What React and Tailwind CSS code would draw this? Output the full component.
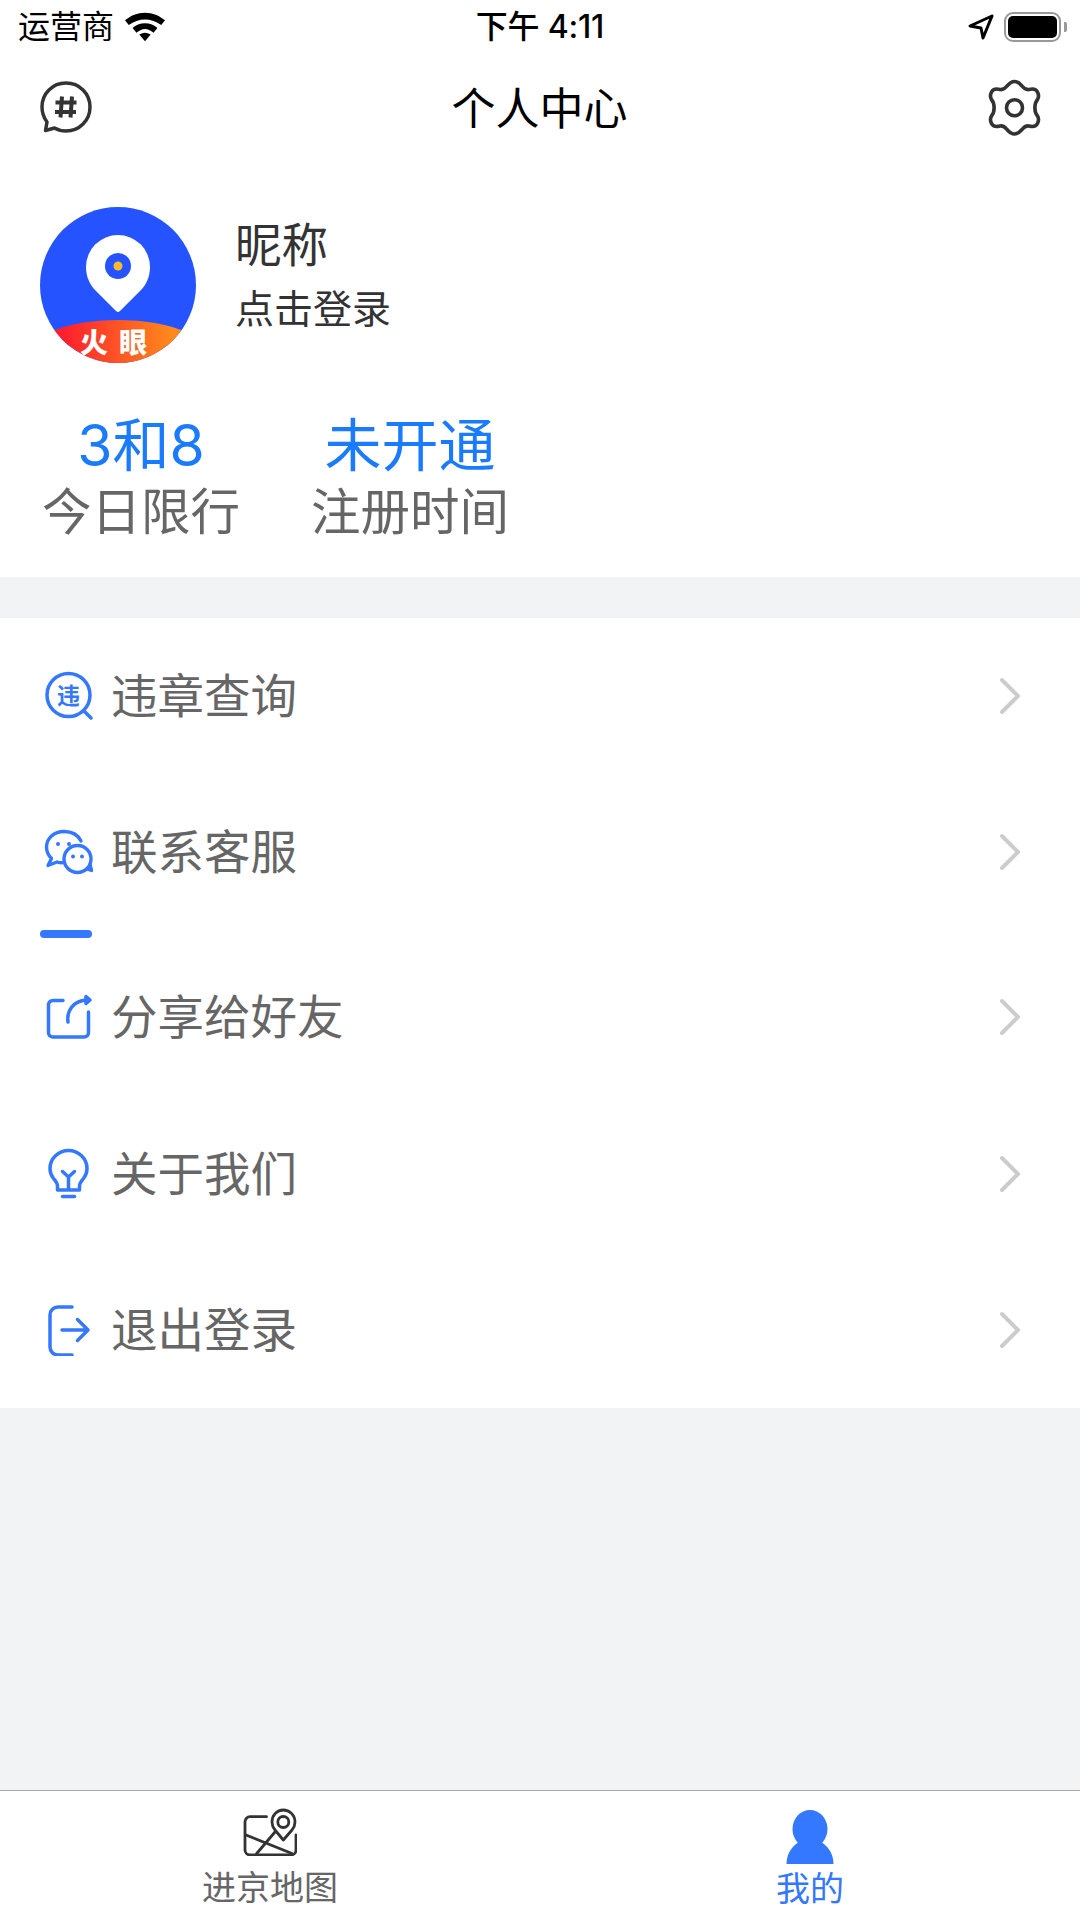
import React from 'react';

const BLUE = '#3478ff';

const ViolationIcon = () => (
  <svg width="52" height="52" viewBox="0 0 52 52" fill="none" stroke={BLUE} strokeWidth="3.500">
    <circle cx="24.500" cy="25" r="21.500" />
    <path d="M40 41l7 7" strokeLinecap="round" />
    <text x="24.500" y="33.500" textAnchor="middle" fontSize="23" fill={BLUE} stroke="none" fontFamily="'Noto Sans CJK SC', sans-serif" fontWeight="700">违</text>
  </svg>
);

const ChatIcon = () => (
  <svg width="52" height="52" viewBox="0 0 52 52" fill="none" stroke={BLUE} strokeWidth="3.400" strokeLinejoin="round" strokeLinecap="round">
    <path d="M20 5.500C10 5.500 2.500 12.500 2.500 21c0 5 2 8.500 5 11.500L4 39.500l9-3.500c1.500.5 3 .8 5 .8" />
    <path d="M37 15C34 9 27.500 5.500 20 5.500" />
    <circle cx="33.500" cy="33" r="13.500" />
    <path d="M43 43l4.500 1.500-1.500-6" fill={BLUE} />
    <circle cx="14" cy="18" r="2" fill={BLUE} stroke="none" />
    <circle cx="25" cy="18" r="2" fill={BLUE} stroke="none" />
    <circle cx="29" cy="30.500" r="2" fill={BLUE} stroke="none" />
    <circle cx="38" cy="30.500" r="2" fill={BLUE} stroke="none" />
  </svg>
);

const ShareIcon = () => (
  <svg width="52" height="52" viewBox="0 0 52 52" fill="none" stroke={BLUE} strokeWidth="3.500" strokeLinecap="round" strokeLinejoin="round">
    <path d="M19 9.500H9a4.500 4.500 0 0 0-4.500 4.500v27.500A4.500 4.500 0 0 0 9 46h31a4.500 4.500 0 0 0 4.500-4.500V21" />
    <path d="M24 31c-1.500-12 6-21 18-22" />
    <path d="M42 5.500l4 3.500-4 3.500z" fill={BLUE} />
  </svg>
);

const BulbIcon = () => (
  <svg width="52" height="52" viewBox="0 0 52 52" fill="none" stroke={BLUE} strokeWidth="3.500" strokeLinecap="round" strokeLinejoin="round">
    <path d="M13.500 42v-4c0-3-2-5-4-7.500C7.500 28 6 24.500 6 20.500 6 10.500 14.500 2.500 24.500 2.500S43 10.500 43 20.500c0 4-1.500 7.500-3.500 10-2 2.500-4 4.500-4 7.500v4z" />
    <path d="M24.500 41V29M18.500 23.500l6 5.500 6-5.500" />
    <path d="M18.500 48.500h12" />
  </svg>
);

const LogoutIcon = () => (
  <svg width="52" height="52" viewBox="0 0 52 52" fill="none" stroke={BLUE} strokeWidth="3.500" strokeLinecap="round" strokeLinejoin="round">
    <path d="M28 3H14a8 8 0 0 0-8 8v32a8 8 0 0 0 8 8h14" />
    <path d="M18 26h25M33.500 15.500L44 26 33.500 36.500" />
  </svg>
);

const menus = [
  { label: '违章查询', Icon: ViolationIcon },
  { label: '联系客服', Icon: ChatIcon },
  { label: '分享给好友', Icon: ShareIcon, mark: true },
  { label: '关于我们', Icon: BulbIcon },
  { label: '退出登录', Icon: LogoutIcon },
];

const Row = ({ label, Icon }) => (
  <div className="flex items-center h-[156.2px] pl-[44px] pr-[59px]">
    <Icon />
    <span className="ml-[15px] text-[46.500px] leading-[60px] text-[#666666]">{label}</span>
    <svg className="ml-auto" width="22" height="38" viewBox="0 0 22 38" fill="none" stroke="#cccccc" strokeWidth="4" strokeLinecap="round" strokeLinejoin="round">
      <path d="M3 3l16 16L3 35" />
    </svg>
  </div>
);

const Logo = () => (
  <svg width="156" height="156" viewBox="0 0 156 156">
    <defs>
      <linearGradient id="fire" x1="0" x2="1" y1="0" y2="0">
        <stop offset="0.1" stopColor="#ff1f2d" />
        <stop offset="0.9" stopColor="#ff8a1c" />
      </linearGradient>
      <clipPath id="disc">
        <circle cx="78" cy="78" r="78" />
      </clipPath>
    </defs>
    <circle cx="78" cy="78" r="78" fill="#2453ff" />
    <path d="M80 104a3 3 0 0 1-4 0L56 84C50 78 46 70 46 60a32 32 0 0 1 64 0c0 10-4 18-10 24z" fill="#fff" />
    <circle cx="78" cy="59" r="13" fill="#2453ff" />
    <circle cx="78" cy="59" r="4.500" fill="#fdbb2b" />
    <g clipPath="url(#disc)">
      <path d="M10 125c18-8 42-12 68-12s50 4 68 12v31H10z" fill="url(#fire)" />
    </g>
    <text x="54" y="146" fontSize="28" textAnchor="middle" fill="#fff" fontWeight="900" fontFamily="'Noto Sans CJK SC', sans-serif">火</text>
    <text x="93" y="146" fontSize="28" textAnchor="middle" fill="#fff" fontWeight="900" fontFamily="'Noto Sans CJK SC', sans-serif">眼</text>
  </svg>
);

const Stat = ({ value, label }) => (
  <div className="flex flex-col items-center">
    <span className="text-[57px] leading-[68px] text-[#1a7bff]">{value}</span>
    <span className="text-[49.500px] leading-[64px] text-[#666666]">{label}</span>
  </div>
);

export default function App() {
  return (
    <div className="w-[1080px] h-[1920px] flex flex-col bg-[#f2f3f5] font-['Inter','Noto_Sans_CJK_SC',sans-serif] overflow-hidden">
      <div className="bg-white">
        {/* status bar */}
        <div className="flex items-center justify-between h-[54px] pl-[18px] pr-[13px] text-black">
          <div className="w-[295px] flex items-center gap-[11px]">
            <span className="text-[32px] leading-[40px]">运营商</span>
            <svg width="40" height="30" viewBox="0 0 42 30" fill="black">
              <path d="M21 0C13 0 6 3 0 8l4 5c5-4 11-6 17-6s12 2 17 6l4-5C36 3 29 0 21 0z" />
              <path d="M21 11c-5 0-10 2-13 5l4 5c2-2 6-4 9-4s7 2 9 4l4-5c-3-3-8-5-13-5z" />
              <path d="M21 21c-2 0-4 1-6 2l6 7 6-7c-2-1-4-2-6-2z" />
            </svg>
          </div>
          <span className="text-[32px] leading-[40px] font-medium tracking-[-0.2px]">下午 4:11</span>
          <div className="w-[300px] flex items-center justify-end gap-[10px]">
            <svg width="26" height="26" viewBox="0 0 26 26" fill="none" stroke="black" strokeWidth="3" strokeLinejoin="round">
              <path d="M24 2L2 12l11 2 2 10z" />
            </svg>
            <div className="flex items-center">
              <div className="w-[57px] h-[30px] border-[2.500px] border-[#999999] rounded-[9px] p-[2px]">
                <div className="w-full h-full bg-black rounded-[5px]" />
              </div>
              <div className="w-[3px] h-[10px] bg-[#999999] rounded-r-[2px] ml-[3px]" />
            </div>
          </div>
        </div>

        {/* nav bar */}
        <div className="flex items-center justify-between h-[108px] pl-[40px] pr-[38px]">
          <svg className="mb-[2px]" width="52" height="52" viewBox="0 0 52 52" fill="none" stroke="#333333" strokeWidth="3.500" strokeLinejoin="round">
            <path d="M26 2C12.500 2 2 12.500 2 26c0 6 2 11 5 15l-1.500 8.500 9-2.500c3.500 2 7.500 3 11.500 3 13.500 0 24-10.500 24-24S39.500 2 26 2z" />
            <path d="M22 15.500l-1.500 21M32 15.500l-1.500 21M15.500 21.500h21M15 31h21" strokeWidth="4" />
          </svg>
          <span className="text-[44px] leading-[60px] text-black mt-[2px]">个人中心</span>
          <svg className="mb-[1px]" width="55" height="57" viewBox="0 0 55 57" fill="none" stroke="#333333" strokeWidth="3.600" strokeLinejoin="round">
            <path d="M20 7C23 3.500 25 2.500 27.500 2.500C30 2.500 32 3.500 35 7C37 9.500 39 11 42 10.500C46 9.500 49 10 50.500 13C52 16 52 18 50.500 20.500C47 24.500 47 33 50.500 37C52 39.500 52 41.500 50.500 44.500C49 47.500 46 48 42 47C39 46.500 37 48 35 50.500C32 54 30 55 27.500 55C25 55 23 54 20 50.500C18 48 16 46.500 13 47C9 48 6 47.500 4.500 44.500C3 41.500 3 39.500 4.500 37C8 33 8 24.500 4.500 20.500C3 18 3 16 4.500 13C6 10 9 9.500 13 10.500C16 11 18 9.500 20 7Z" />
            <circle cx="27.500" cy="28.750" r="8" />
          </svg>
        </div>

        {/* profile */}
        <div className="flex items-center mt-[45px] pl-[40px]">
          <Logo />
          <div className="ml-[39px] flex flex-col -mt-[21px]">
            <span className="text-[46.500px] leading-[60px] text-[#333333]">昵称</span>
            <span className="text-[39px] leading-[50px] text-[#333333] mt-[9px]">点击登录</span>
          </div>
        </div>

        {/* stats */}
        <div className="flex mt-[49px] pl-[42px] gap-[71px] h-[165px]">
          <Stat value="3和8" label="今日限行" />
          <Stat value="未开通" label="注册时间" />
        </div>
      </div>

      {/* menu */}
      <div className="mt-[41px] bg-white">
        {menus.map(({ label, Icon, mark }) => (
          <React.Fragment key={label}>
            {mark && <div className="ml-[40px] w-[52px] h-[8px] rounded-full bg-[#3478ff] -mb-[8px] relative" />}
            <div className={mark ? 'pt-[9px]' : ''}>
              <Row label={label} Icon={Icon} />
            </div>
          </React.Fragment>
        ))}
      </div>

      {/* tab bar */}
      <div className="mt-auto h-[130px] bg-white border-t-[1px] border-[#aaaaaa] flex">
        <div className="flex-1 flex flex-col items-center pt-[17px]">
          <svg width="54" height="48" viewBox="0 0 54 48" fill="none" stroke="#333333" strokeWidth="2.800" strokeLinejoin="round" strokeLinecap="round">
            <path d="M23.500 8.700H7a5 5 0 0 0-5 5V42a5 5 0 0 0 5 5h41a5 5 0 0 0 5-5V27" />
            <path d="M3 27l46 18.500M13.700 45.500L32 24" />
            <path d="M40.300 32L32 22C30 19.500 29 17.500 29 14C29 7 34 2 40.300 2C46.500 2 52 7 52 14C52 17.500 51 19.500 49 22Z" fill="white" />
            <circle cx="40.300" cy="14" r="5.500" />
          </svg>
          <span className="text-[34px] leading-[44px] text-[#666666] mt-[10px]">进京地图</span>
        </div>
        <div className="flex-1 flex flex-col items-center pt-[19px]">
          <svg width="48" height="54" viewBox="0 0 48 54" fill={BLUE}>
            <ellipse cx="24" cy="19" rx="17.500" ry="19" />
            <path d="M.500 54C.500 42 8 34 15 31h18c7 3 14.500 11 14.500 23z" />
          </svg>
          <span className="text-[34px] leading-[44px] text-[#3478ff] mt-[3px]">我的</span>
        </div>
      </div>
    </div>
  );
}
